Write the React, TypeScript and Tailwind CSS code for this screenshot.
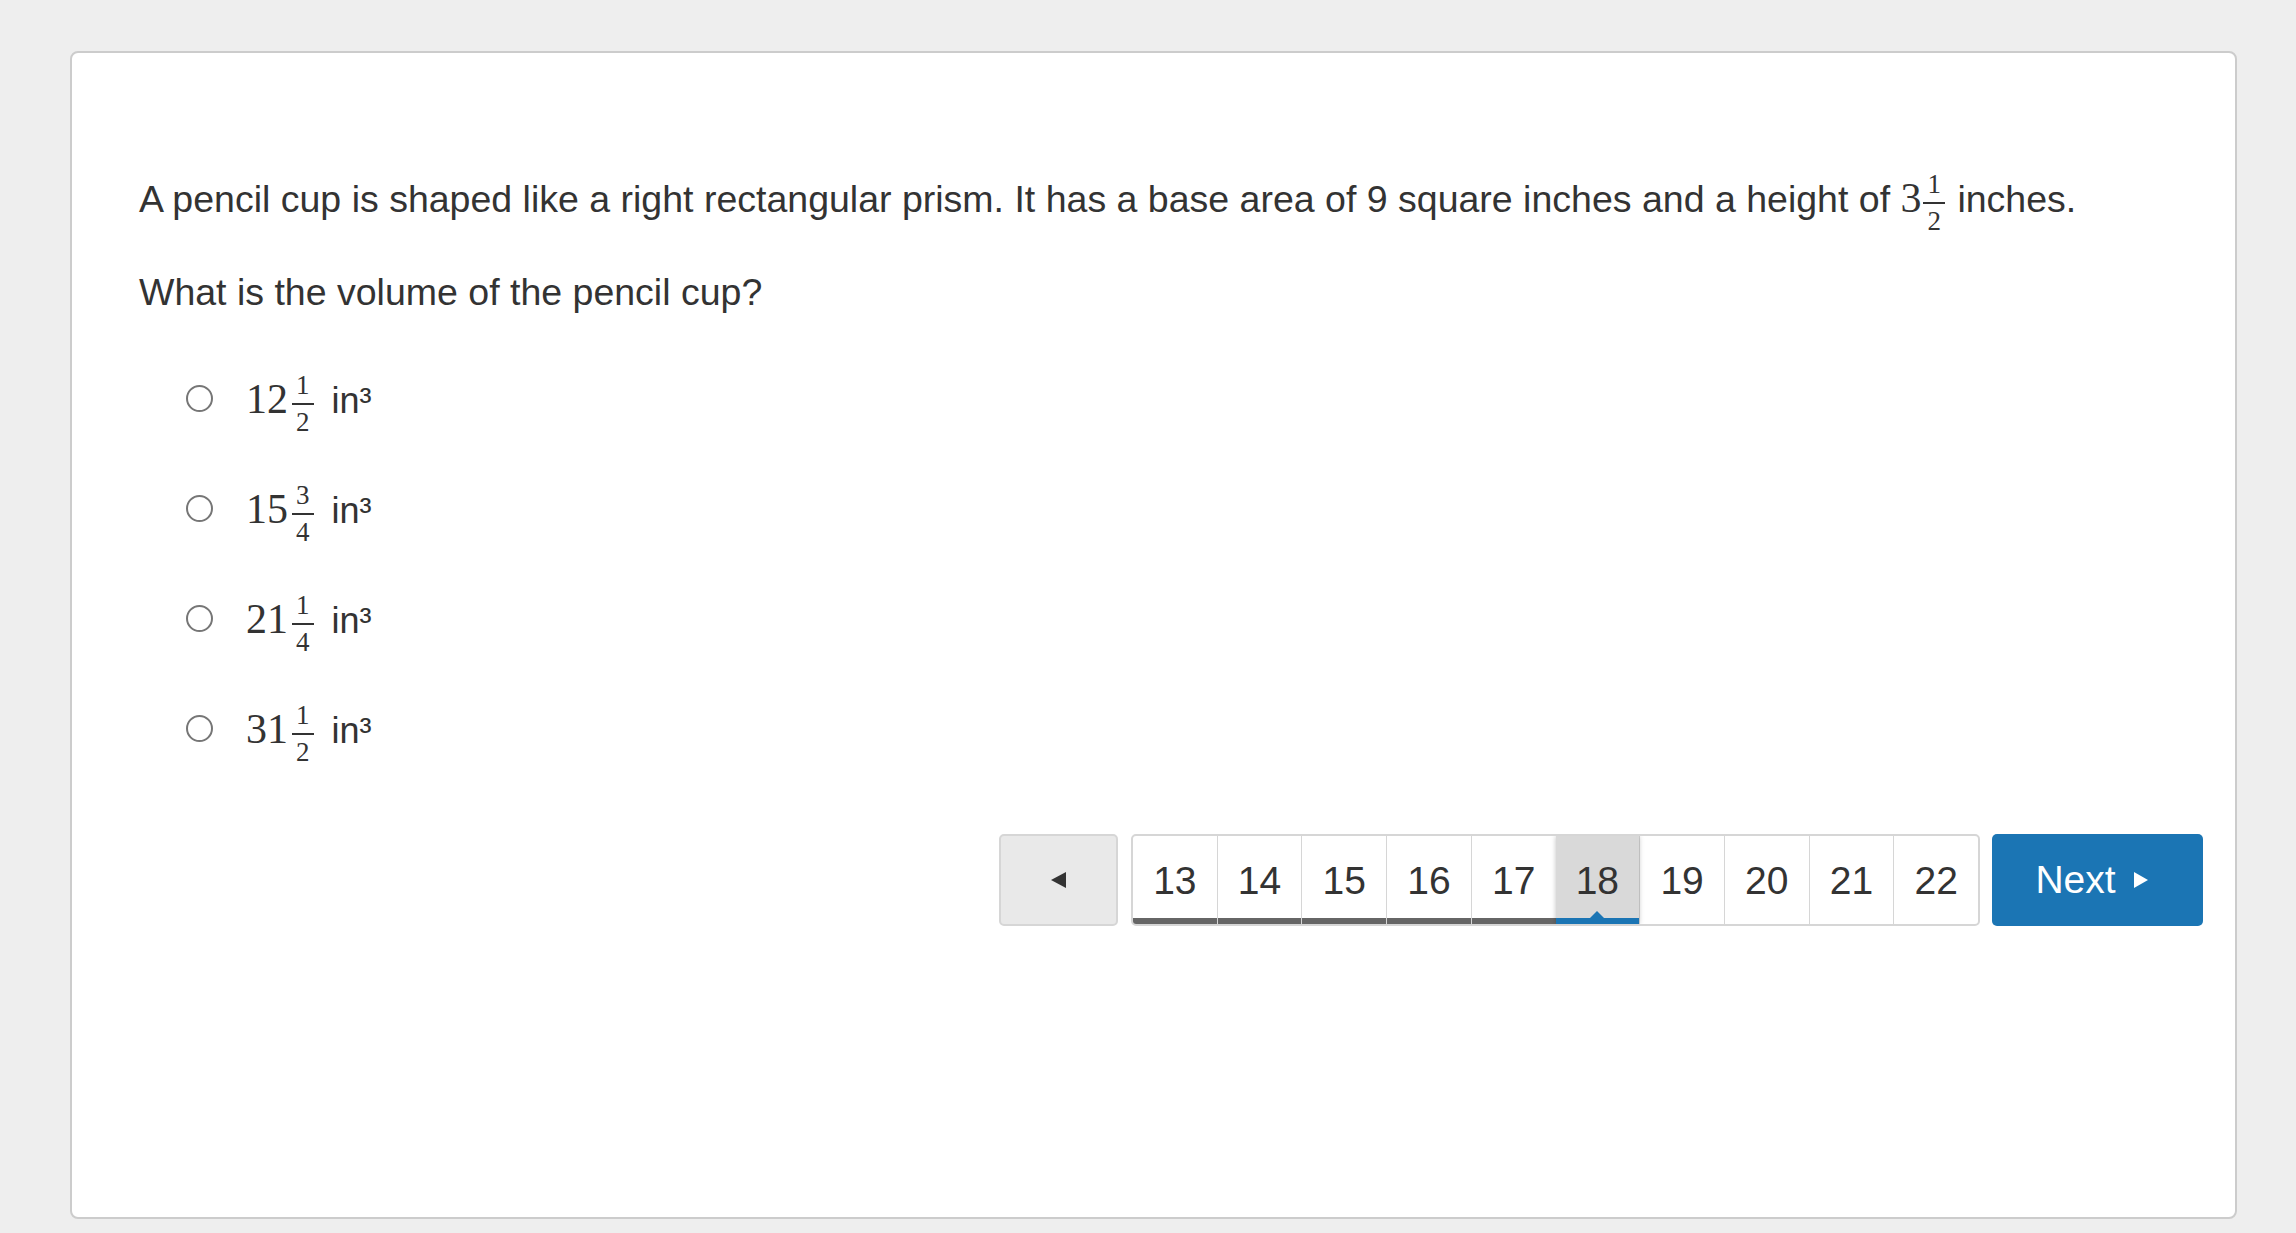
import React from "react";

const sans = "font-['Liberation_Sans',Arial,sans-serif]";
const serif = "font-['Liberation_Serif','Times_New_Roman',serif]";

function Frac({ n, d, wide }: { n: string; d: string; wide?: boolean }) {
  return (
    <span
      className={`inline-flex flex-col items-center align-middle ${wide ? "ml-[4px] mr-[8px]" : "mx-[2px]"} ${serif}`}
    >
      <span className="text-[27px] leading-[28px] pb-[4px] px-[4px]">{n}</span>
      <span className="h-[2px] w-full bg-[#333]" />
      <span className="text-[27px] leading-[28px] pt-[3px] px-[4px]">{d}</span>
    </span>
  );
}

function Mixed({ whole, n, d, wide }: { whole: string; n: string; d: string; wide?: boolean }) {
  return (
    <span className="whitespace-nowrap">
      <span className={`${serif} text-[42px]`}>{whole}</span>
      <Frac n={n} d={d} wide={wide} />
    </span>
  );
}

const options = [
  { whole: "12", n: "1", d: "2" },
  { whole: "15", n: "3", d: "4" },
  { whole: "21", n: "1", d: "4" },
  { whole: "31", n: "1", d: "2" },
];

const pages = [13, 14, 15, 16, 17, 18, 19, 20, 21, 22];
const current = 18;

export default function App() {
  return (
    <div className={`min-h-screen bg-[#eeeeee] pt-[51px] pl-[70px] ${sans} text-[#333]`}>
      <div className="w-[2167px] h-[1168px] bg-white border-2 border-[#cccccc] rounded-[8px] pl-[67px] pr-[32px] pt-[117px]">
        <p className="whitespace-nowrap text-[37.5px] leading-[52px]">
          A pencil cup is shaped like a right rectangular prism. It has a base area of 9 square
          inches and a height of <Mixed whole="3" n="1" d="2" /> inches.
        </p>
        <p className="mt-[31px] text-[37.5px] leading-[52px]">What is the volume of the pencil cup?</p>

        <div className="mt-[53px] flex flex-col gap-[45px]">
          {options.map((o) => (
            <label key={o.whole} className="flex items-start cursor-pointer">
              <span className="ml-[47px] mt-[14px] w-[27px] h-[27px] rounded-full border-2 border-[#767676] bg-white shrink-0" />
              <span className="ml-[33px] text-[36px] leading-[52px]">
                <Mixed whole={o.whole} n={o.n} d={o.d} wide /> in³
              </span>
            </label>
          ))}
        </div>

        <div className="mt-[68px] flex justify-end">
          <button
            type="button"
            className="w-[119px] h-[92px] mr-[13px] flex items-center justify-center bg-[#e9e9e9] border-2 border-[#d6d6d6] rounded-[5px]"
          >
            <span className="w-0 h-0 border-t-[8px] border-b-[8px] border-r-[15px] border-t-transparent border-b-transparent border-r-[#333]" />
          </button>

          <div className="w-[849px] h-[92px] flex border-2 border-[#d6d6d6] rounded-[5px] overflow-hidden">
            {pages.map((p, i) => {
              const active = p === current;
              const bar = p < current ? "bg-[#666666]" : active ? "bg-[#1b75b4]" : "bg-transparent";
              return (
                <div
                  key={p}
                  className={`relative flex-1 flex flex-col ${i > 0 ? "border-l border-[#d6d6d6]" : ""} ${
                    active ? "bg-[#d9d9d9] shadow-[0_0_5px_rgba(0,0,0,0.25)] z-10 border-l-0" : ""
                  }`}
                >
                  <span className="flex-1 flex items-center justify-center pt-[8px] text-[39px]">{p}</span>
                  <span className={`h-[6px] ${bar}`} />
                  {active && (
                    <span className="absolute bottom-[5px] left-1/2 -translate-x-1/2 w-0 h-0 border-l-[8px] border-r-[8px] border-b-[8px] border-l-transparent border-r-transparent border-b-[#1b75b4]" />
                  )}
                </div>
              );
            })}
          </div>

          <button
            type="button"
            className="w-[211px] h-[92px] ml-[12px] pr-[12px] flex items-center justify-center bg-[#1b75b4] rounded-[5px] text-white text-[39px]"
          >
            <span>Next</span>
            <span className="ml-[18px] w-0 h-0 border-t-[8px] border-b-[8px] border-l-[14px] border-t-transparent border-b-transparent border-l-white" />
          </button>
        </div>
      </div>
    </div>
  );
}
